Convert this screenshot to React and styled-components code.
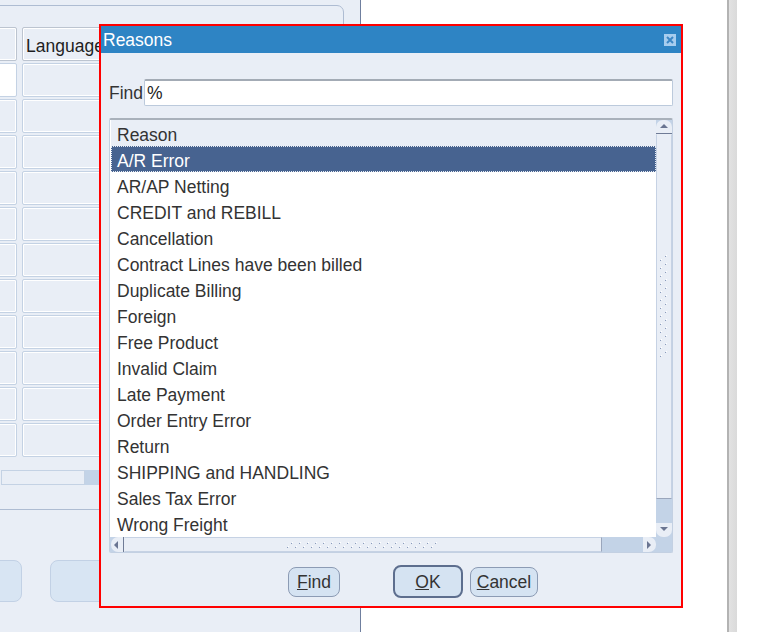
import React from 'react';
import styled, { createGlobalStyle } from 'styled-components';

const GlobalStyle = createGlobalStyle`
  html, body {
    margin: 0;
    padding: 0;
  }
  body {
    width: 782px;
    height: 632px;
    overflow: hidden;
    background: #fff;
    font-family: "Liberation Sans", Arial, sans-serif;
  }
`;

const Screen = styled.div`
  position: relative;
  width: 782px;
  height: 632px;
  display: flex;
  overflow: hidden;
`;

/* ---------- background form ---------- */

const LeftPanel = styled.div`
  width: 361px;
  flex: none;
  box-sizing: border-box;
  background: #e9eef6;
  border-right: 1px solid #6f7f9e;
  display: flex;
  flex-direction: column;
  overflow: hidden;
`;

const FormBox = styled.div`
  margin: 5px 0 0 -20px;
  width: 364px;
  height: 505px;
  flex: none;
  box-sizing: border-box;
  border: 1px solid #aebcd2;
  border-radius: 0 7px 7px 0;
  padding-top: 21px;
`;

const Grid = styled.div`
  margin-left: 6px;
  display: grid;
  grid-template-columns: 30px 240px;
  grid-auto-rows: 34px;
  column-gap: 5px;
  row-gap: 2px;
`;

const Cell = styled.div`
  box-sizing: border-box;
  background: ${p => (p.$white ? '#fff' : '#e9eef6')};
  border: 1px solid ${p => (p.$head ? '#bcc4d0' : '#c4d2e4')};
  box-shadow: inset 0 0 0 1px #fff;
  border-radius: 2px;
  font-size: 17.5px;
  color: #1e1e1e;
  display: flex;
  align-items: center;
  padding: 4px 0 0 3px;
`;

const TableScroll = styled.div`
  margin: 13px 0 0 20px;
  height: 15px;
  display: flex;
`;

const TableScrollTrack = styled.div`
  width: ${p => p.$w}px;
  box-sizing: border-box;
  background: ${p => (p.$dark ? '#c3d3e7' : '#e9eef6')};
  border: ${p => (p.$dark ? 'none' : '1px solid #c4d2e4')};
`;

const FormButtons = styled.div`
  margin: 50px 0 0 -20px;
  display: flex;
  gap: 28px;
`;

const FormButton = styled.div`
  width: ${p => p.$w}px;
  height: 42px;
  box-sizing: border-box;
  background: #d8e5f3;
  border: 1px solid #c2d1e5;
  border-radius: 8px;
`;

const WhiteArea = styled.div`
  width: 366px;
  flex: none;
  background: #fff;
`;

const GrayBar = styled.div`
  width: 10px;
  flex: none;
  box-sizing: border-box;
  border-left: 2px solid #b3b3b3;
  background: linear-gradient(to right, #e2e2e2, #dadada);
`;

const Rest = styled.div`
  flex: 1;
  background: #fff;
`;

/* ---------- dialog window ---------- */

const Dialog = styled.div`
  position: absolute;
  left: 99px;
  top: 24px;
  width: 584px;
  height: 584px;
  box-sizing: border-box;
  border: 2px solid #ff0000;
  background: #e9eef6;
  display: flex;
  flex-direction: column;
`;

const TitleBar = styled.div`
  height: 27px;
  flex: none;
  box-sizing: border-box;
  background: #2e84c4;
  display: flex;
  align-items: center;
  justify-content: space-between;
  padding: 0 5px 0 2px;
`;

const Title = styled.span`
  color: #fff;
  font-size: 17.5px;
  padding-top: 2px;
`;

const CloseBox = styled.div`
  width: 12px;
  height: 12px;
  background: #a7cdee;
  display: flex;
  align-items: center;
  justify-content: center;
`;

const Body = styled.div`
  flex: 1;
  display: flex;
  flex-direction: column;
  padding: 26px 8px 0 8px;
`;

const FindRow = styled.div`
  display: flex;
  align-items: center;
  height: 27px;
`;

const Label = styled.span`
  width: 35px;
  font-size: 17.5px;
  color: #333;
  padding-top: 2px;
`;

const Input = styled.div`
  flex: 1;
  height: 27px;
  box-sizing: border-box;
  background: #fff;
  border: 1px solid #bccadc;
  border-top: 2px solid #a3abb5;
  border-radius: 2px;
  font-size: 17.5px;
  color: #222;
  padding: 1px 0 0 2px;
  display: flex;
  align-items: center;
`;

const ListBox = styled.div`
  margin-top: 12px;
  height: 435px;
  box-sizing: border-box;
  border: 1px solid #c3d0e2;
  border-top: 2px solid #a9b1bb;
  border-radius: 2px;
  display: grid;
  grid-template-columns: 1fr 16px;
  grid-template-rows: 1fr 15px;
`;

const ListArea = styled.div`
  background: #fff;
  padding-left: 1px;
  overflow: hidden;
`;

const Row = styled.div`
  height: 26px;
  box-sizing: border-box;
  padding: 4px 0 0 6px;
  display: flex;
  align-items: center;
  font-size: 17.5px;
  color: ${p => (p.$selected ? '#fff' : '#333')};
  background: ${p => (p.$head ? '#e9eef6' : p.$selected ? '#476390' : '#fff')};
  outline: ${p => (p.$selected ? '1px dotted #e6ebf3' : 'none')};
  outline-offset: -1px;
`;

const VScroll = styled.div`
  display: flex;
  flex-direction: column;
  background: #c3d3e7;
`;

const HScroll = styled.div`
  display: flex;
  background: #c3d3e7;
  padding-left: 1px;
`;

const Corner = styled.div`
  background: #c3d3e7;
`;

const Spacer = styled.div`
  flex: 1;
`;

const ArrowButton = styled.div`
  flex: none;
  width: ${p => (p.$horizontal ? '13px' : 'auto')};
  height: ${p => (p.$horizontal ? 'auto' : '14px')};
  background: #e9eef6;
  display: flex;
  align-items: center;
  justify-content: center;
  box-sizing: border-box;
  border-radius: ${p =>
    ({ up: '7px 7px 0 0', down: '0 0 7px 7px', left: '7px 0 0 7px', right: '0 7px 7px 0' }[p.$dir])};
  border-bottom: ${p => (p.$dir === 'up' ? '1px solid #6f7b96' : 'none')};
  border-right: ${p => (p.$dir === 'left' ? '1px solid #6f7b96' : 'none')};
`;

const Thumb = styled.div`
  flex: none;
  box-sizing: border-box;
  background: #e9eef6;
  width: ${p => (p.$horizontal ? `${p.$size}px` : 'auto')};
  height: ${p => (p.$horizontal ? 'auto' : `${p.$size}px`)};
  border-left: 1px solid ${p => (p.$horizontal ? 'transparent' : '#c6d2e4')};
  border-right: 1px solid ${p => (p.$horizontal ? '#9aa6bc' : '#c6d2e4')};
  border-bottom: 1px solid ${p => (p.$horizontal ? '#c6d2e4' : '#9aa6bc')};
  border-top: 1px solid ${p => (p.$horizontal ? '#c6d2e4' : 'transparent')};
  display: flex;
  align-items: center;
  justify-content: center;
  padding-bottom: ${p => (p.$horizontal ? 0 : 20)}px;
`;

const ButtonRow = styled.div`
  margin-top: 12px;
  height: 33px;
  display: flex;
  align-items: center;
  padding-left: 179px;
`;

const Button = styled.div`
  width: ${p => p.$w}px;
  height: ${p => (p.$default ? 33 : 30)}px;
  margin-left: ${p => p.$gap || 0}px;
  box-sizing: border-box;
  border: ${p => (p.$default ? '2px solid #5d6e8e' : '1px solid #8c9bb4')};
  border-radius: 8px;
  background: #d5e3f2;
  font-size: 17.5px;
  color: #333;
  display: flex;
  align-items: center;
  justify-content: center;
  padding-top: 2px;
`;

const Key = styled.span`
  text-decoration: underline;
`;

/* ---------- small drawings ---------- */

const Triangle = ({ dir }) => {
  const pts = {
    up: '1,6 5,2 9,6',
    down: '1,2 5,6 9,2',
    left: '6,1 2,5 6,9',
    right: '2,1 6,5 2,9'
  }[dir];
  return (
    <svg width="10" height="10" viewBox="0 0 10 10">
      <polygon points={pts} fill="#6a7591" />
    </svg>
  );
};

const Grip = ({ horizontal, count }) => {
  const marks = [];
  for (let i = 0; i < count; i++) {
    if (horizontal) {
      marks.push(
        <g key={i}>
          <rect x={i * 8 + 5} y={0} width="1" height="1" fill="#fff" />
          <rect x={i * 8 + 4} y={1} width="1" height="1" fill="#8a9bbb" />
          <rect x={i * 8 + 1} y={4} width="1" height="1" fill="#fff" />
          <rect x={i * 8} y={5} width="1" height="1" fill="#8a9bbb" />
        </g>
      );
    } else {
      marks.push(
        <g key={i}>
          <rect x={6} y={i * 8} width="1" height="1" fill="#fff" />
          <rect x={5} y={i * 8 + 1} width="1" height="1" fill="#8a9bbb" />
          <rect x={1} y={i * 8 + 4} width="1" height="1" fill="#fff" />
          <rect x={0} y={i * 8 + 5} width="1" height="1" fill="#8a9bbb" />
        </g>
      );
    }
  }
  const len = count * 8;
  return horizontal ? (
    <svg width={len} height="6" viewBox={`0 0 ${len} 6`}>
      {marks}
    </svg>
  ) : (
    <svg width="8" height={len} viewBox={`0 0 8 ${len}`}>
      {marks}
    </svg>
  );
};

const CloseIcon = () => (
  <svg width="10" height="10" viewBox="0 0 10 10">
    <path d="M2 2 L8 8 M8 2 L2 8" stroke="#3c87c5" strokeWidth="2" />
  </svg>
);

const reasons = [
  'A/R Error',
  'AR/AP Netting',
  'CREDIT and REBILL',
  'Cancellation',
  'Contract Lines have been billed',
  'Duplicate Billing',
  'Foreign',
  'Free Product',
  'Invalid Claim',
  'Late Payment',
  'Order Entry Error',
  'Return',
  'SHIPPING and HANDLING',
  'Sales Tax Error',
  'Wrong Freight'
];

const tableRows = Array.from({ length: 11 }, (_, i) => i);

const App = () => (
  <>
    <GlobalStyle />
    <Screen>
      <LeftPanel>
        <FormBox>
          <Grid>
            <Cell $head />
            <Cell $head>Language</Cell>
            {tableRows.map(i => (
              <React.Fragment key={i}>
                <Cell $white={i === 0} />
                <Cell />
              </React.Fragment>
            ))}
          </Grid>
          <TableScroll>
            <TableScrollTrack $w={84} />
            <TableScrollTrack $w={200} $dark />
          </TableScroll>
        </FormBox>
        <FormButtons>
          <FormButton $w={42} />
          <FormButton $w={120} />
        </FormButtons>
      </LeftPanel>
      <WhiteArea />
      <GrayBar />
      <Rest />

      <Dialog>
        <TitleBar>
          <Title>Reasons</Title>
          <CloseBox>
            <CloseIcon />
          </CloseBox>
        </TitleBar>
        <Body>
          <FindRow>
            <Label>Find</Label>
            <Input>%</Input>
          </FindRow>
          <ListBox>
            <ListArea>
              <Row $head>Reason</Row>
              {reasons.map((r, i) => (
                <Row key={r} $selected={i === 0}>
                  {r}
                </Row>
              ))}
            </ListArea>
            <VScroll>
              <ArrowButton $dir="up">
                <Triangle dir="up" />
              </ArrowButton>
              <Thumb $size={365}>
                <Grip count={13} />
              </Thumb>
              <Spacer />
              <ArrowButton $dir="down">
                <Triangle dir="down" />
              </ArrowButton>
            </VScroll>
            <HScroll>
              <ArrowButton $dir="left" $horizontal>
                <Triangle dir="left" />
              </ArrowButton>
              <Thumb $horizontal $size={478}>
                <Grip horizontal count={19} />
              </Thumb>
              <Spacer />
              <ArrowButton $dir="right" $horizontal>
                <Triangle dir="right" />
              </ArrowButton>
            </HScroll>
            <Corner />
          </ListBox>
          <ButtonRow>
            <Button $w={52}>
              <span>
                <Key>F</Key>ind
              </span>
            </Button>
            <Button $w={70} $gap={53} $default>
              <span>
                <Key>O</Key>K
              </span>
            </Button>
            <Button $w={68} $gap={7}>
              <span>
                <Key>C</Key>ancel
              </span>
            </Button>
          </ButtonRow>
        </Body>
      </Dialog>
    </Screen>
  </>
);

export default App;
